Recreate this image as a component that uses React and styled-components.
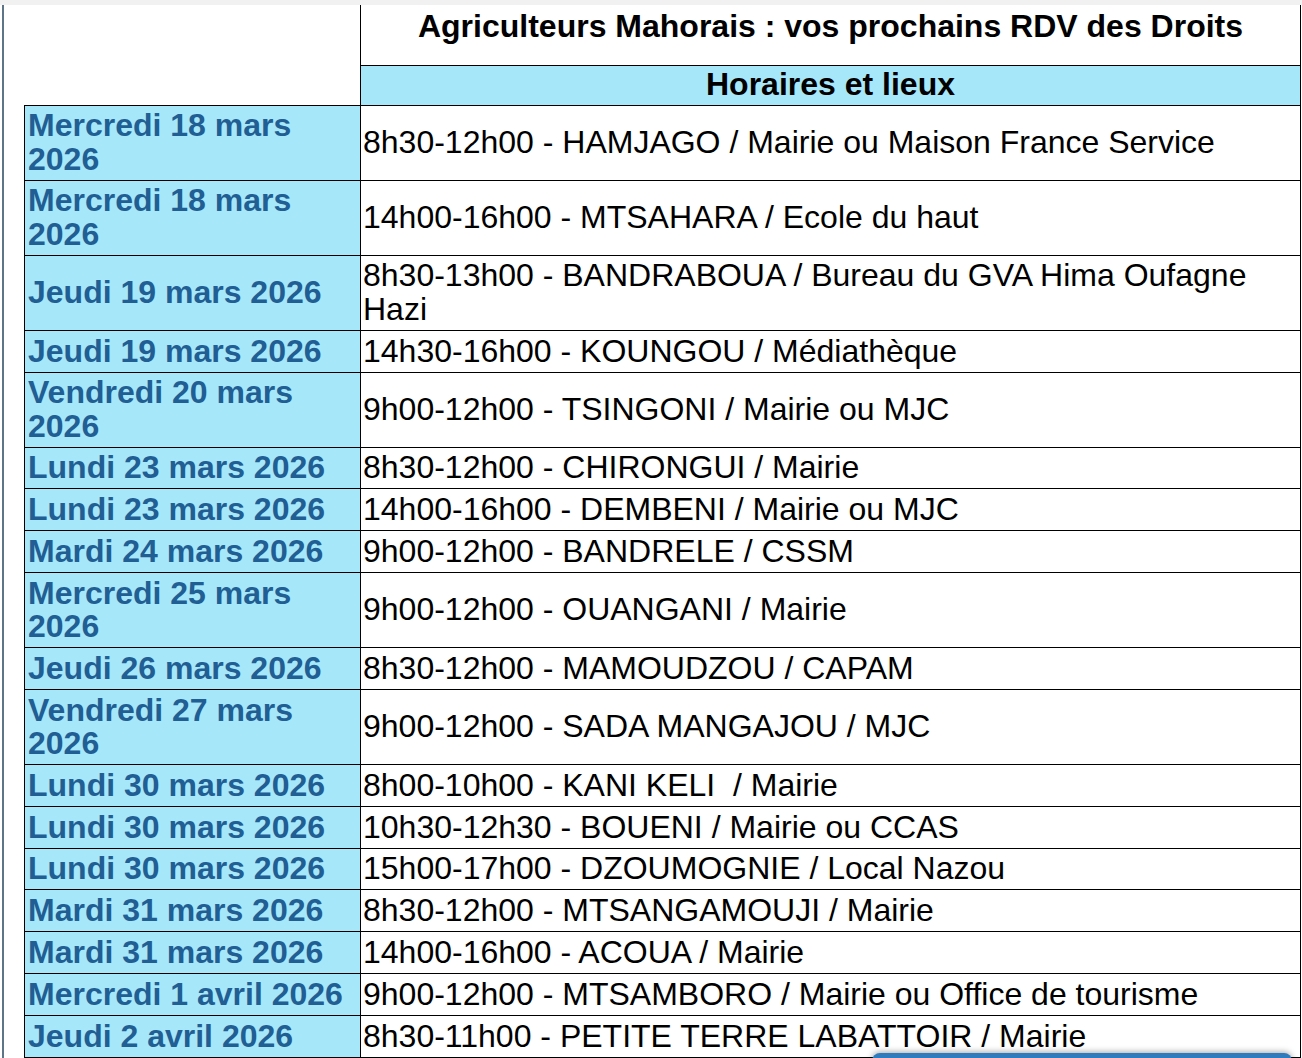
import React from 'react'
import styled, { createGlobalStyle } from 'styled-components'

const GlobalStyle = createGlobalStyle`
  html, body {
    margin: 0;
    padding: 0;
    background: #fff;
    font-family: "Liberation Sans", Arial, Helvetica, sans-serif;
    overflow: hidden;
  }
`

const TopStrip = styled.div`
  height: 5px;
  background: #f1f1f1;
`

const Frame = styled.div`
  margin-left: 2px;
  border-left: 2px solid #5d7587;
  padding-left: 20px;
  min-height: calc(100vh - 5px);
  box-sizing: border-box;
`

const Table = styled.table`
  border-collapse: collapse;
  table-layout: fixed;
  width: 1276px;
  font-size: 32px;
  line-height: 33.3px;
  color: #000;
`

const Col = styled.col`
  width: ${p => p.$w};
`

const EmptyCell = styled.td`
  border: none;
  padding: 0;
`

const TitleCell = styled.td`
  border: 1px solid #000;
  border-top: none;
  height: 60px;
  padding: 5px 3px 0;
  box-sizing: border-box;
  vertical-align: top;
  text-align: center;
  font-weight: bold;
`

const SubHeadCell = styled.td`
  border: 1px solid #000;
  background: #a6e7fa;
  height: 40px;
  padding: 0 3px;
  box-sizing: border-box;
  text-align: center;
  font-weight: bold;
`

const DateCell = styled.td`
  border: 1px solid #000;
  background: #a6e7fa;
  color: #215e93;
  font-weight: bold;
  padding: 3.75px 3px;
  vertical-align: middle;
`

const PlaceCell = styled.td`
  border: 1px solid #000;
  padding: 3.75px 2px;
  vertical-align: middle;
  white-space: pre-wrap;
`

const FloatingTab = styled.div`
  position: fixed;
  left: 872px;
  top: 1053px;
  width: 420px;
  height: 40px;
  background: #2f7bbd;
  border-radius: 8px;
  box-shadow: 0 -1px 6px rgba(0, 0, 0, 0.35);
`

const rows = [
  ['Mercredi 18 mars 2026', '8h30-12h00 - HAMJAGO / Mairie ou Maison France Service'],
  ['Mercredi 18 mars 2026', '14h00-16h00 - MTSAHARA / Ecole du haut'],
  ['Jeudi 19 mars 2026', '8h30-13h00 - BANDRABOUA / Bureau du GVA Hima Oufagne Hazi'],
  ['Jeudi 19 mars 2026', '14h30-16h00 - KOUNGOU / Médiathèque'],
  ['Vendredi 20 mars 2026', '9h00-12h00 - TSINGONI / Mairie ou MJC'],
  ['Lundi 23 mars 2026', '8h30-12h00 - CHIRONGUI / Mairie'],
  ['Lundi 23 mars 2026', '14h00-16h00 - DEMBENI / Mairie ou MJC'],
  ['Mardi 24 mars 2026', '9h00-12h00 - BANDRELE / CSSM'],
  ['Mercredi 25 mars 2026', '9h00-12h00 - OUANGANI / Mairie'],
  ['Jeudi 26 mars 2026', '8h30-12h00 - MAMOUDZOU / CAPAM'],
  ['Vendredi 27 mars 2026', '9h00-12h00 - SADA MANGAJOU / MJC'],
  ['Lundi 30 mars 2026', '8h00-10h00 - KANI KELI  / Mairie'],
  ['Lundi 30 mars 2026', '10h30-12h30 - BOUENI / Mairie ou CCAS'],
  ['Lundi 30 mars 2026', '15h00-17h00 - DZOUMOGNIE / Local Nazou'],
  ['Mardi 31 mars 2026', '8h30-12h00 - MTSANGAMOUJI / Mairie'],
  ['Mardi 31 mars 2026', '14h00-16h00 - ACOUA / Mairie'],
  ['Mercredi 1 avril 2026', '9h00-12h00 - MTSAMBORO / Mairie ou Office de tourisme'],
  ['Jeudi 2 avril 2026', '8h30-11h00 - PETITE TERRE LABATTOIR / Mairie'],
]

const App = () => {
  return (
    <>
      <GlobalStyle />
      <TopStrip />
      <Frame>
        <Table>
          <colgroup>
            <Col $w="336px" />
            <Col $w="940px" />
          </colgroup>
          <tbody>
            <tr>
              <EmptyCell rowSpan={2} />
              <TitleCell>Agriculteurs Mahorais : vos prochains RDV des Droits</TitleCell>
            </tr>
            <tr>
              <SubHeadCell>Horaires et lieux</SubHeadCell>
            </tr>
            {rows.map(([date, place], i) => (
              <tr key={i}>
                <DateCell>{date}</DateCell>
                <PlaceCell>{place}</PlaceCell>
              </tr>
            ))}
          </tbody>
        </Table>
      </Frame>
      <FloatingTab />
    </>
  )
}

export default App
